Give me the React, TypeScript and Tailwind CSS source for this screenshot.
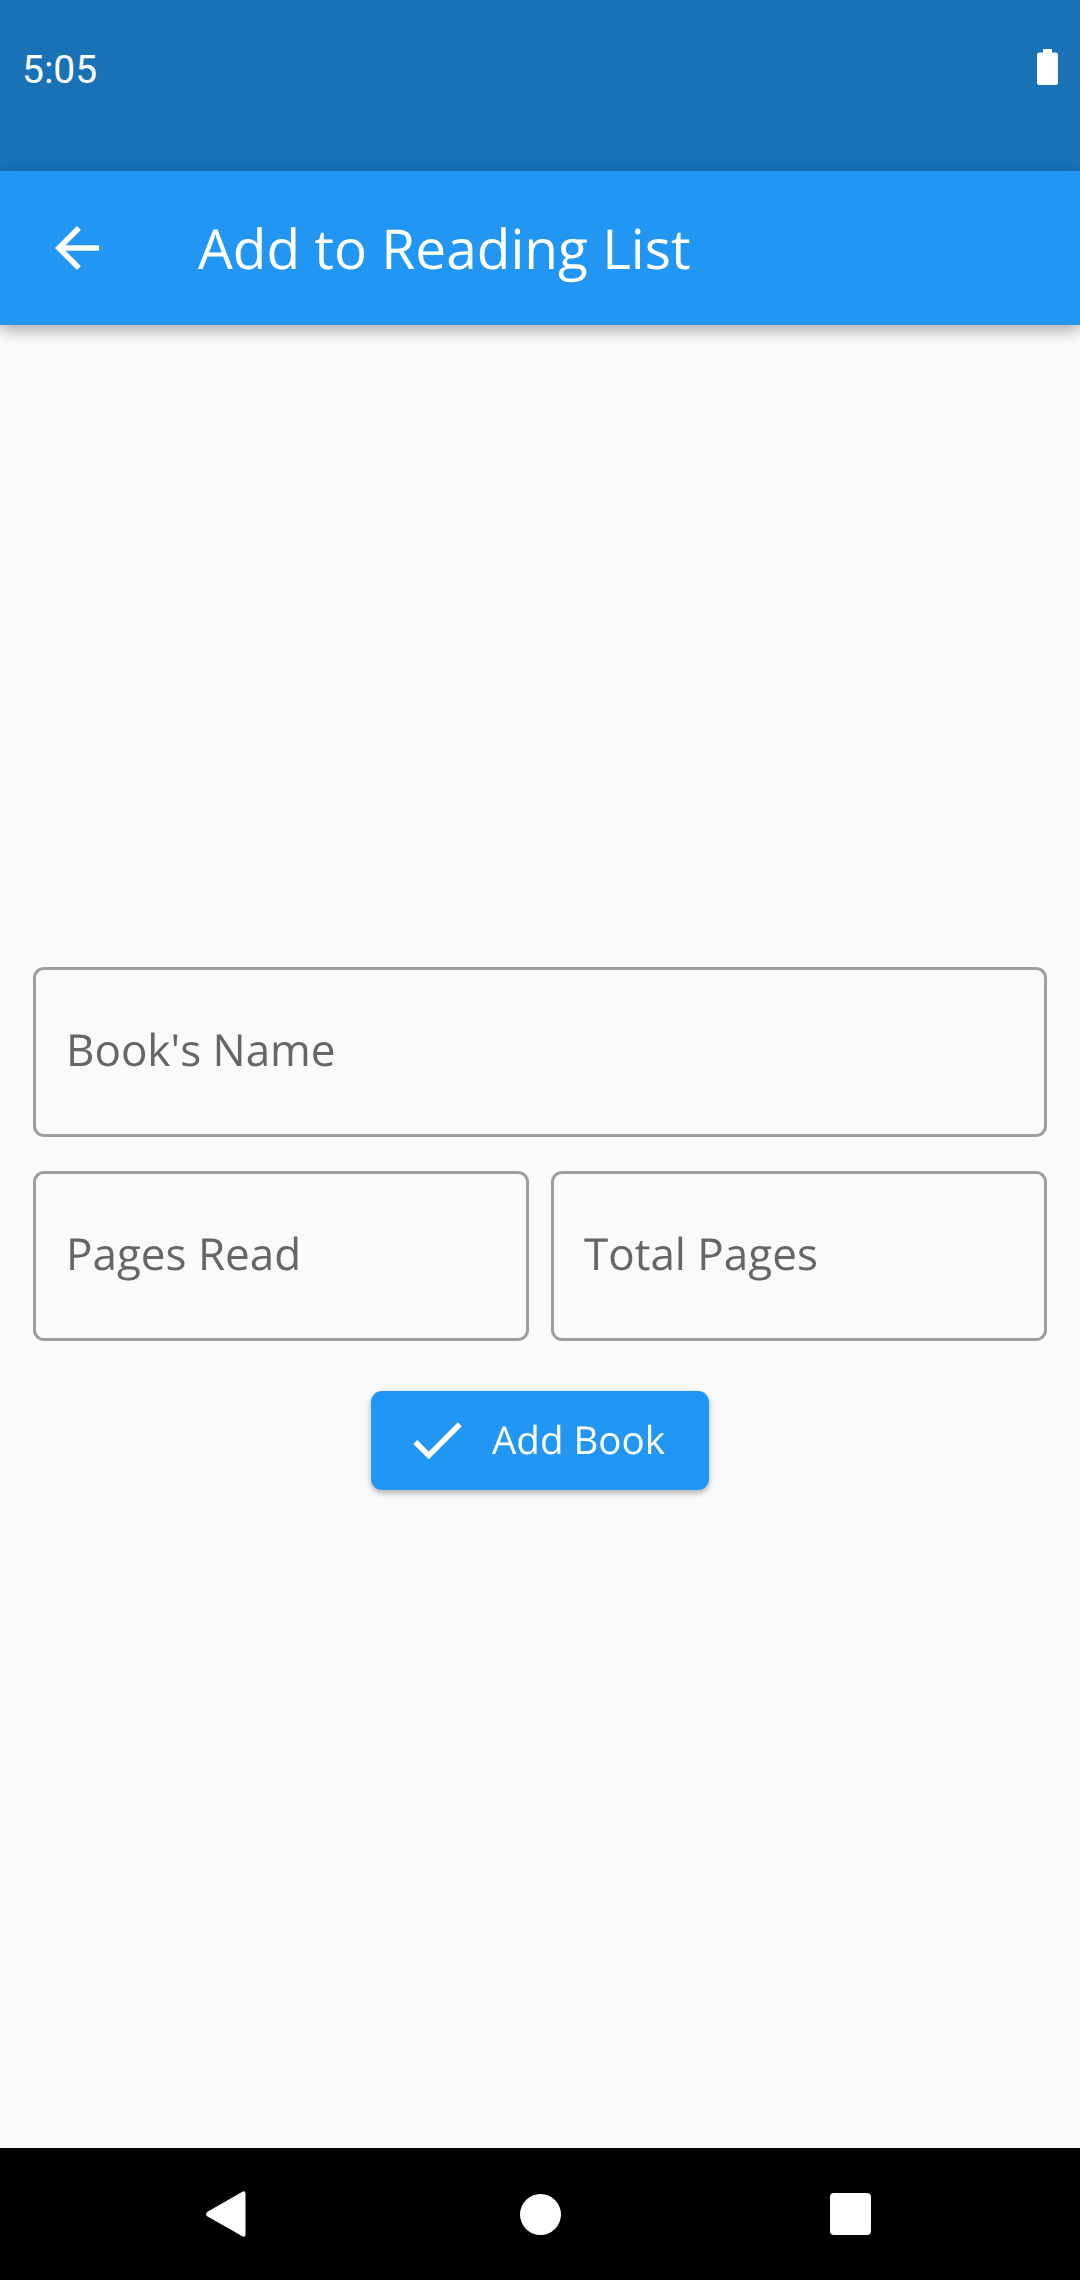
function Field({ label, className = '' }: { label: string; className?: string }) {
  return (
    <input
      readOnly
      placeholder={label}
      className={`h-[170px] min-w-0 rounded-[11px] border-[3px] border-[#9e9e9e] bg-transparent px-[30px] pb-[7px] text-[44px] text-[#212121] will-change-transform outline-none [text-rendering:geometricPrecision] placeholder:text-[#666666] font-['Open_Sans',sans-serif] ${className}`}
    />
  );
}

export default function App() {
  return (
    <div className="flex h-[2280px] w-[1080px] flex-col overflow-hidden bg-[#fafafa] font-['Open_Sans',sans-serif]">
      <div className="flex h-[171px] items-center justify-between bg-[#1971b6] pb-[30px] pl-[22px] pr-[22px] text-white">
        <span className="font-['Roboto',sans-serif] text-[39px] leading-none">5:05</span>
        <svg width="21" height="36" viewBox="0 0 21 36" fill="white" className="-mt-[7px]">
          <path d="M6 0h9v3.500h3.500A2.500 2.500 0 0 1 21 6v27.500a2.500 2.500 0 0 1-2.500 2.500h-16A2.500 2.500 0 0 1 0 33.500V6a2.500 2.500 0 0 1 2.500-2.500H6z" />
        </svg>
      </div>

      <header className="relative z-10 flex h-[154px] items-center bg-[#2196f3] pl-11 text-white shadow-[0_6px_14px_rgba(0,0,0,0.3)]">
        <svg width="66" height="66" viewBox="0 0 24 24" fill="white">
          <path d="M20 11H7.830l5.590-5.590L12 4l-8 8 8 8 1.410-1.410L7.830 13H20v-2z" />
        </svg>
        <h1 className="ml-[88px] text-[55px] leading-none font-normal will-change-transform [text-rendering:geometricPrecision]">Add to Reading List</h1>
      </header>

      <main className="flex flex-1 flex-col justify-center gap-[34px] px-[33px] pb-[17px]">
        <Field label="Book's Name" className="w-full" />
        <div className="flex gap-[22px]">
          <Field label="Pages Read" className="flex-1" />
          <Field label="Total Pages" className="flex-1" />
        </div>
        <button className="mt-[16px] flex h-[99px] w-[338px] items-center self-center rounded-[11px] bg-[#2196f3] pl-[33px] text-white shadow-[0_3px_6px_rgba(0,0,0,0.3)]">
          <svg width="66" height="66" viewBox="0 0 24 24" fill="white">
            <path d="M9 16.170L4.830 12l-1.420 1.410L9 19 21 7l-1.410-1.410z" />
          </svg>
          <span className="ml-[22px] mt-[1px] text-[38.5px] leading-none will-change-transform [text-rendering:geometricPrecision]">Add Book</span>
        </button>
      </main>

      <nav className="flex h-[132px] items-center justify-center bg-black pr-[3px]">
        <svg width="40" height="46" viewBox="0 0 40 46" fill="white" className="mr-[274px]">
          <path d="M1.500 20.800 35.500 1.200Q39.500-1.500 39.500 3v40q0 4.500-4 1.800L1.500 25.500q-3-2.300 0-4.700z" />
        </svg>
        <div className="mr-[269px] h-[41px] w-[41px] rounded-full bg-white" />
        <div className="h-[42px] w-[41px] rounded-[4px] bg-white" />
      </nav>
    </div>
  );
}
